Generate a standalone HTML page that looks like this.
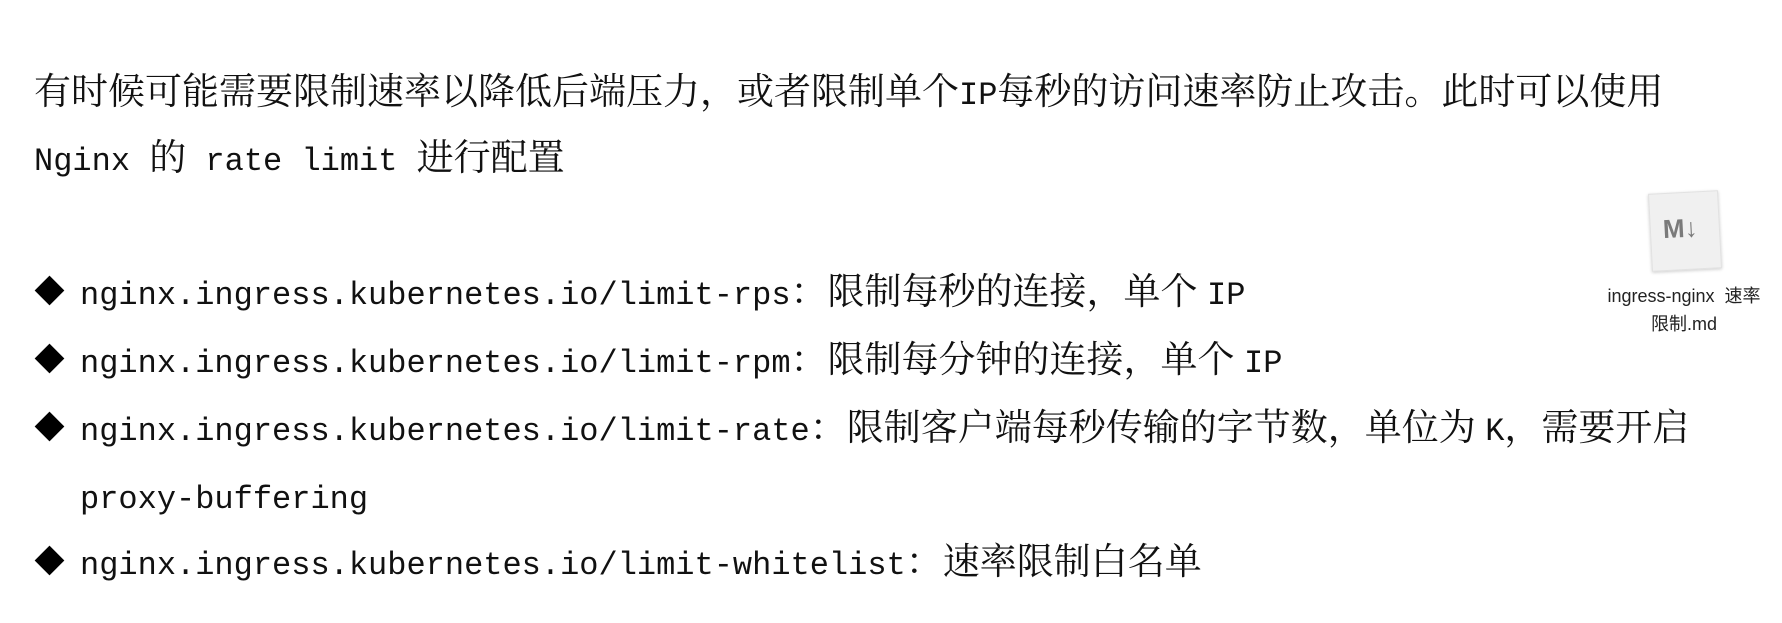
<!DOCTYPE html>
<html><head><meta charset="utf-8"><style>
body{margin:0;width:1782px;height:623px;background:#fff;overflow:hidden;position:relative;font-family:"Liberation Serif","Noto Serif CJK SC",serif;color:#111}
.l{position:absolute;left:34px;font-size:37px;line-height:40px;white-space:nowrap;font-family:"Noto Serif CJK SC","Noto Sans CJK SC",serif}
.m{font-family:"Liberation Mono",monospace;font-size:32px}
.b{position:absolute;left:39px;width:21px;height:21px;background:#000;transform:rotate(45deg)}
.lab{position:absolute;font-family:"Liberation Sans","Noto Sans CJK SC",sans-serif;font-size:18px;color:#222;text-align:center;width:220px;left:1574px}
</style></head><body>
<div class="l" style="top:68px">有时候可能需要限制速率以降低后端压力，或者限制单个<span class="m">IP</span>每秒的访问速率防止攻击。此时可以使用</div>
<div class="l" style="top:134px"><span class="m">Nginx </span>的<span class="m"> rate limit </span>进行配置</div>

<div class="b" style="top:280px"></div>
<div class="l" style="top:268px;left:80px"><span class="m">nginx.ingress.kubernetes.io/limit-rps</span>：限制每秒的连接，单个 <span class="m">IP</span></div>
<div class="b" style="top:348px"></div>
<div class="l" style="top:336px;left:80px"><span class="m">nginx.ingress.kubernetes.io/limit-rpm</span>：限制每分钟的连接，单个 <span class="m">IP</span></div>
<div class="b" style="top:416px"></div>
<div class="l" style="top:404px;left:80px"><span class="m">nginx.ingress.kubernetes.io/limit-rate</span>：限制客户端每秒传输的字节数，单位为 <span class="m">K</span>，需要开启</div>
<div class="l" style="top:472px;left:80px"><span class="m">proxy-buffering</span></div>
<div class="b" style="top:550px"></div>
<div class="l" style="top:538px;left:80px"><span class="m">nginx.ingress.kubernetes.io/limit-whitelist</span>：速率限制白名单</div>

<div style="position:absolute;left:1650px;top:192px;width:68px;height:76px;background:#f0f0f0;border:1px solid #e2e2e2;box-shadow:0 1px 3px rgba(0,0,0,.2);transform:rotate(-3deg)">
<div style="position:absolute;left:12px;top:20px;font:900 26px 'Liberation Sans',sans-serif;color:#7a7a7a">M&#8595;</div>
</div>
<div class="lab" style="top:282px">ingress-nginx&nbsp; 速率</div>
<div class="lab" style="top:310px">限制.md</div>
</body></html>
